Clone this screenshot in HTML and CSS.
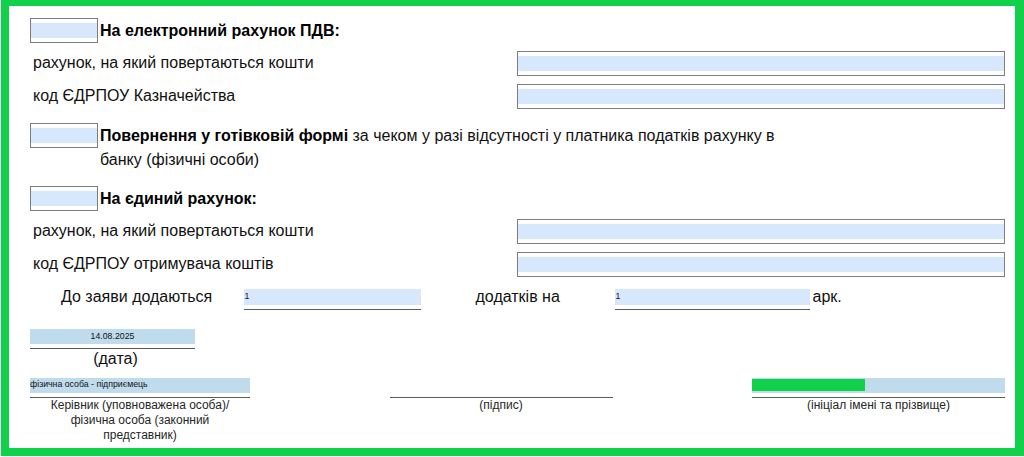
FILE: index.html
```html
<!DOCTYPE html>
<html lang="uk">
<head>
<meta charset="utf-8">
<title>Заява</title>
<link rel="stylesheet" href="styles.css">
</head>
<body>
<main class="frame">
  <section class="option option-first">
    <div class="box check"><div class="fill"></div></div>
    <p class="option-text"><b>На електронний рахунок ПДВ:</b></p>
  </section>
  <div class="row row-a">
    <span class="label">рахунок, на який повертаються кошти</span>
    <div class="box wide"><div class="fill"></div></div>
  </div>
  <div class="row row-b">
    <span class="label">код ЄДРПОУ Казначейства</span>
    <div class="box wide"><div class="fill"></div></div>
  </div>
  <section class="option option-cash">
    <div class="box check"><div class="fill"></div></div>
    <p class="option-text"><b>Повернення у готівковій формі</b> за чеком у разі відсутності у платника податків рахунку в банку (фізичні особи)</p>
  </section>
  <section class="option option-single">
    <div class="box check"><div class="fill"></div></div>
    <p class="option-text"><b>На єдиний рахунок:</b></p>
  </section>
  <div class="row row-a">
    <span class="label">рахунок, на який повертаються кошти</span>
    <div class="box wide"><div class="fill"></div></div>
  </div>
  <div class="row row-b">
    <span class="label">код ЄДРПОУ отримувача коштів</span>
    <div class="box wide"><div class="fill"></div></div>
  </div>
  <div class="attach">
    <span class="attach-lead">До заяви додаються</span>
    <div class="line-field count-a">1</div>
    <span class="attach-mid">додатків на</span>
    <div class="line-field count-b">1</div>
    <span class="attach-end">арк.</span>
  </div>
  <div class="date">
    <div class="sign-field date-field">14.08.2025</div>
    <div class="date-caption">(дата)</div>
  </div>
  <div class="signs">
    <div class="sign sign-role">
      <div class="sign-field role-field">фізична особа - підприємець</div>
      <div class="caption">Керівник (уповноважена особа)/<br>фізична особа (законний<br>представник)</div>
    </div>
    <div class="sign sign-mark">
      <div class="sign-field empty-field"></div>
      <div class="caption">(підпис)</div>
    </div>
    <div class="sign sign-name">
      <div class="sign-field name-field"><div class="redaction"></div></div>
      <div class="caption">(ініціал імені та прізвище)</div>
    </div>
  </div>
</main>
</body>
</html>
```

FILE: styles.css
```css
* { box-sizing: border-box; }
html, body { margin: 0; padding: 0; background: #fff; }
body { font-family: "Liberation Sans", Arial, sans-serif; color: #111; overflow: hidden; }

.frame {
  height: 456px;
  margin-left: 1px;
  border-style: solid;
  border-color: #10d24a;
  border-width: 6px 9px 8px 8px;
  padding: 12px 10px 0 21px;
  font-size: 16px;
  line-height: 18px;
}

.box { border: 1px solid #7d7d7d; padding: 4px 0; background: #fff; flex: none; }
.fill { height: 15px; background: #d7e8fd; }
.check { width: 68px; height: 25px; }
.wide { width: 488px; height: 25px; }

.option { display: flex; align-items: flex-start; gap: 2px; }
.option-text { margin: 0; width: 680px; line-height: 25px; }
.option-text b { color: #000; }
.option-first { height: 33px; }
.option-cash { margin-top: 14px; height: 63px; }
.option-cash .option-text { line-height: 24px; padding-top: 1px; }
.option-single { height: 33px; }

.row { display: flex; justify-content: space-between; align-items: center; height: 25px; }
.row-a { margin-bottom: 8px; }
.label { padding: 0 0 2px 3px; }

.attach { display: flex; align-items: flex-start; height: 21px; margin-top: 12px; }
.attach-lead { margin-left: 31px; width: 182.5px; line-height: 15px; }
.line-field {
  height: 21px;
  padding-left: 1px;
  font-size: 8.75px;
  line-height: 15px;
  background: linear-gradient(#d7e8fd 16px, transparent 16px);
  border-bottom: 1px solid #5a5a5a;
}
.count-a { width: 177px; }
.attach-mid { margin-left: 55px; width: 139px; line-height: 15px; }
.count-b { width: 195px; }
.attach-end { margin-left: 3px; line-height: 15px; }

.date { width: 165px; margin-top: 19px; text-align: center; }
.sign-field {
  height: 20px;
  font-size: 8.75px;
  line-height: 13px;
  background: linear-gradient(#bfdbec 15px, transparent 15px);
  border-bottom: 1px solid #5a5a5a;
}
.date-field { line-height: 14px; }
.date-caption { padding-left: 6px; line-height: 19px; }

.signs { display: flex; justify-content: space-between; margin-top: 10px; }
.empty-field { background: none; }
.sign { flex: none; }
.sign-role { width: 220px; }
.sign-mark { width: 223px; }
.sign-name { width: 253px; }
.caption { font-size: 12px; line-height: 15px; text-align: center; color: #262626; }
.name-field { padding-top: 1px; }
.redaction { width: 113px; height: 12px; background: #10d24a; }
```
